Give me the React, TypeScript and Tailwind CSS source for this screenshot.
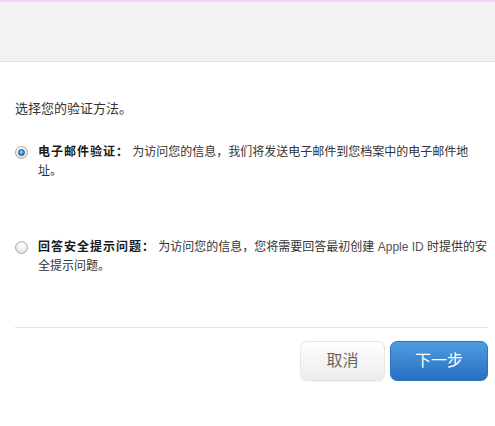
const FONT = '"Liberation Sans", "Noto Sans CJK SC", sans-serif'

function Radio({ checked }: { checked?: boolean }) {
  return (
    <span className="flex h-[13px] w-[13px] shrink-0 items-center justify-center rounded-full border border-[#a9a9a9] bg-[radial-gradient(circle_at_50%_35%,#ffffff_0%,#f0f0f0_45%,#d4d4d4_100%)]">
      {checked && (
        <span className="h-[7px] w-[7px] rounded-full border border-[#1c4f86] bg-[radial-gradient(circle_at_45%_40%,#9fdcff_0%,#3d8fd6_55%,#1d5a9c_100%)]" />
      )}
    </span>
  )
}

function Option({
  checked,
  label,
  children,
}: {
  checked?: boolean
  label: string
  children: React.ReactNode
}) {
  return (
    <div className="flex items-start">
      <div className="flex h-[19px] w-[23px] shrink-0 items-center">
        <Radio checked={checked} />
      </div>
      <p className="w-[450px] text-[12px] leading-[19px] text-[#333]">
        <b className="font-bold tracking-[1px] text-[#1a1a1a]">{label}</b> {children}
      </p>
    </div>
  )
}

export default function App() {
  return (
    <div className="h-[426px] w-[495px] bg-white" style={{ fontFamily: FONT }}>
      <div className="h-[62px] border-t-2 border-b border-t-[#fbd3f6] border-b-[#e4e4e4] bg-[#f2f2f2]" />

      <div className="pl-[15px] pr-[7px]">
        <p className="mt-[38px] text-[13px] leading-[18px] text-[#333]">选择您的验证方法。</p>

        <div className="mt-[25px]">
          <Option checked label="电子邮件验证：">
            为访问您的信息，我们将发送电子邮件到您档案中的电子邮件地址。
          </Option>
        </div>

        <div className="mt-[57px]">
          <Option label="回答安全提示问题：">
            为访问您的信息，您将需要回答最初创建 <span className="text-[#555]">Apple ID</span> 时提供的安全提示问题。
          </Option>
        </div>

        <div className="mt-[51px] border-t border-[#e2e2e2]" />

        <div className="mt-[13px] flex justify-end gap-[5px]">
          <button className="h-[40px] w-[85px] rounded-[7px] border border-[#e6e6e6] bg-gradient-to-b from-[#ffffff] to-[#ececec] text-[16px] text-[#666] shadow-[0_1px_1px_rgba(0,0,0,0.05)]">
            取消
          </button>
          <button className="h-[40px] w-[98px] rounded-[7px] border border-[#2e74c4] bg-gradient-to-b from-[#4d9de2] to-[#2a6fc2] text-[16px] text-white">
            下一步
          </button>
        </div>
      </div>
    </div>
  )
}
